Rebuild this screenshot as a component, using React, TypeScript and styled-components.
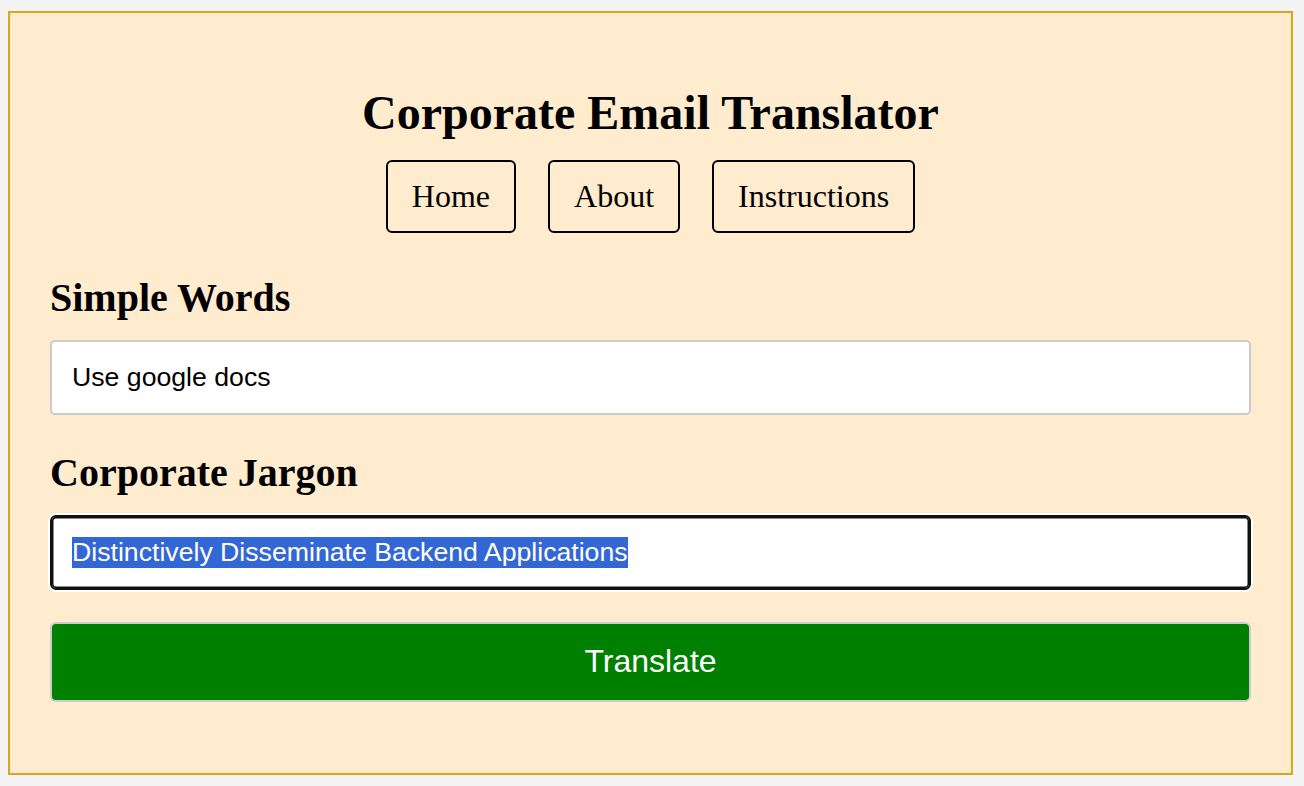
import React, { useEffect, useRef, useState } from "react";
import styled, { createGlobalStyle } from "styled-components";

const GlobalStyle = createGlobalStyle`
  html, body {
    margin: 0;
    padding: 0;
    background: #f4f4f4;
  }
  body {
    font-family: "Liberation Serif", "Times New Roman", serif;
  }
  * { box-sizing: border-box; }
`;

const Page = styled.div`
  padding: 11px 11px 12px 8px;
`;

const Card = styled.main`
  background: #ffebcd;
  border: 2px solid #daa520;
  padding: 72px 40px 71px;
  display: flex;
  flex-direction: column;
`;

const Title = styled.h1`
  margin: 0;
  font-size: 48px;
  font-weight: bold;
  text-align: center;
  color: #000;
`;

const Nav = styled.nav`
  margin-top: 20px;
  display: flex;
  justify-content: center;
  gap: 32px;
`;

const NavButton = styled.button`
  font-family: "Liberation Serif", "Times New Roman", serif;
  font-size: 32px;
  line-height: normal;
  color: #000;
  background: transparent;
  border: 2px solid #000;
  border-radius: 6px;
  padding: 16px 24px;
  cursor: pointer;
`;

const Field = styled.section<{ $first?: boolean }>`
  display: flex;
  flex-direction: column;
  margin-top: ${(p) => (p.$first ? "40.5px" : "33.8px")};
`;

const Label = styled.h2`
  margin: 0 0 19.5px;
  font-size: 40px;
  font-weight: bold;
  color: #000;
`;

const TextInput = styled.input`
  width: 100%;
  font-family: "Liberation Sans", Arial, sans-serif;
  font-size: 26.67px;
  line-height: normal;
  color: #000;
  background: #fff;
  border: 2px solid #ccc;
  border-radius: 5px;
  padding: 20px;

  &::selection {
    background: #3367d6;
    color: #fff;
  }

  &:focus {
    outline: none;
    border-color: #101010;
    border-radius: 6px;
    box-shadow: inset 0 0 0 1.5px #101010, 0 0 0 2px #fff;
  }
`;

const TranslateButton = styled.button`
  margin-top: 32px;
  width: 100%;
  font-family: "Liberation Sans", Arial, sans-serif;
  font-size: 32px;
  line-height: normal;
  color: #fff;
  background: #008000;
  border: 2px solid #ccc;
  border-radius: 6px;
  padding: 19.2px;
  cursor: pointer;
`;

export default function App() {
  const [simple, setSimple] = useState("Use google docs");
  const [jargon, setJargon] = useState("Distinctively Disseminate Backend Applications");
  const jargonRef = useRef<HTMLInputElement>(null);

  useEffect(() => {
    const el = jargonRef.current;
    if (el) {
      el.focus();
      el.select();
    }
  }, []);

  return (
    <Page>
      <GlobalStyle />
      <Card>
        <Title>Corporate Email Translator</Title>
        <Nav>
          <NavButton>Home</NavButton>
          <NavButton>About</NavButton>
          <NavButton>Instructions</NavButton>
        </Nav>
        <Field $first>
          <Label>Simple Words</Label>
          <TextInput value={simple} onChange={(e) => setSimple(e.target.value)} />
        </Field>
        <Field>
          <Label>Corporate Jargon</Label>
          <TextInput ref={jargonRef} value={jargon} onChange={(e) => setJargon(e.target.value)} />
        </Field>
        <TranslateButton>Translate</TranslateButton>
      </Card>
    </Page>
  );
}
